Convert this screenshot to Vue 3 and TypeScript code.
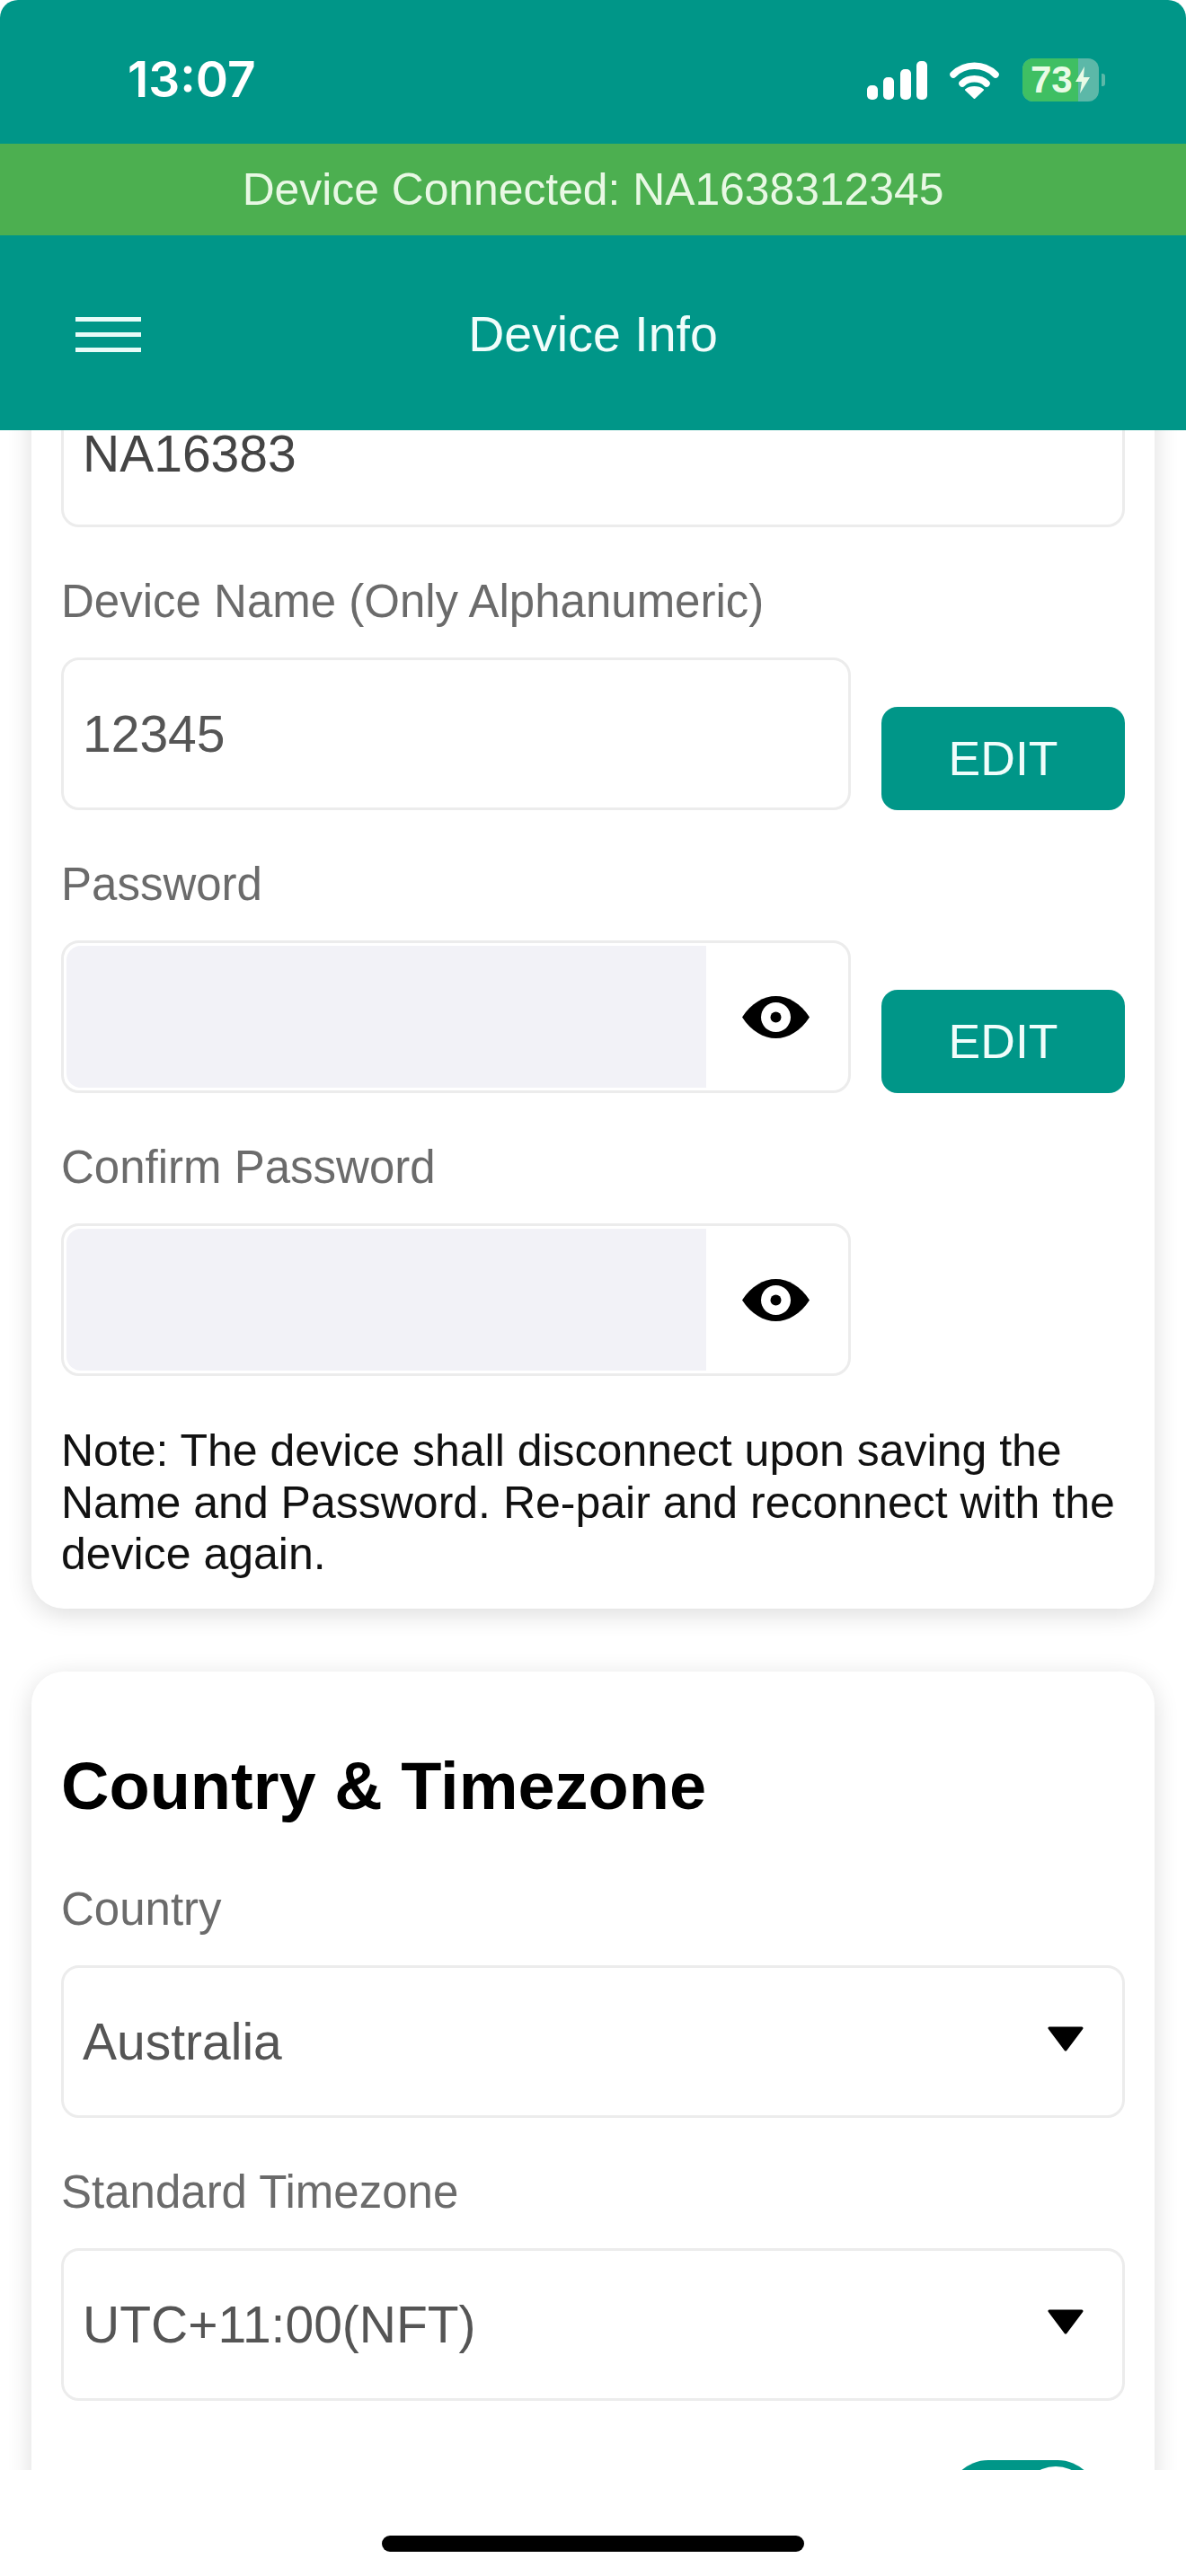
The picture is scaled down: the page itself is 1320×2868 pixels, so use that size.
<template>
  <div class="screen">
    <div class="status-bar">
      <span class="clock">13:07</span>
      <div class="status-icons">
        <svg class="signal" width="67" height="43" viewBox="0 0 67 43">
          <rect x="0" y="27" width="12" height="16" rx="5" fill="#fff" />
          <rect x="18" y="18" width="12" height="25" rx="5" fill="#fff" />
          <rect x="37" y="9" width="12" height="34" rx="5" fill="#fff" />
          <rect x="55" y="0" width="12" height="43" rx="5" fill="#fff" />
        </svg>
        <svg class="wifi" width="55" height="41" viewBox="0 0 55 41">
          <path d="M4 14 C17 1 38 1 51 14" fill="none" stroke="#fff" stroke-width="7.5" stroke-linecap="round" />
          <path d="M14 24 C21 17 34 17 41 24" fill="none" stroke="#fff" stroke-width="7.5" stroke-linecap="round" />
          <path d="M27.5 40 L18 31 C23 27 32 27 37 31 Z" fill="#fff" stroke="#fff" stroke-width="2" stroke-linejoin="round" />
        </svg>
        <div class="battery">
          <div class="battery-fill"></div>
          <span class="battery-text">73</span>
          <svg class="bolt" width="18" height="32" viewBox="0 0 18 30">
            <path d="M11 0 L1 17 H8 L6 30 L17 12 H10 Z" fill="#e9fbe6" />
          </svg>
        </div>
        <div class="battery-cap"></div>
      </div>
    </div>
    <div class="connection-bar">Device Connected: NA1638312345</div>
    <div class="app-header">
      <div class="menu-btn">
        <span></span>
        <span></span>
        <span></span>
      </div>
      <div class="title">Device Info</div>
    </div>

    <div class="content">
      <section class="card card-device">
        <div class="field first-field">
          <div class="input-box single">{{ serial }}</div>
        </div>

        <div class="field">
          <label>Device Name (Only Alphanumeric)</label>
          <div class="row">
            <div class="input-box">{{ deviceName }}</div>
            <button class="edit-btn">EDIT</button>
          </div>
        </div>

        <div class="field">
          <label>Password</label>
          <div class="row">
            <div class="input-box password">
              <div class="pw-fill"></div>
              <div class="eye">
                <svg width="75" height="47" viewBox="0 0 75 47">
                  <path fill="#000" :d="eyePath" />
                  <circle cx="37.5" cy="23.5" r="16.5" fill="#fff" />
                  <circle cx="37.5" cy="23.5" r="6" fill="#000" />
                </svg>
              </div>
            </div>
            <button class="edit-btn">EDIT</button>
          </div>
        </div>

        <div class="field">
          <label>Confirm Password</label>
          <div class="row">
            <div class="input-box password">
              <div class="pw-fill"></div>
              <div class="eye">
                <svg width="75" height="47" viewBox="0 0 75 47">
                  <path fill="#000" :d="eyePath" />
                  <circle cx="37.5" cy="23.5" r="16.5" fill="#fff" />
                  <circle cx="37.5" cy="23.5" r="6" fill="#000" />
                </svg>
              </div>
            </div>
            <div class="edit-spacer"></div>
          </div>
        </div>

        <p class="note">
          Note: The device shall disconnect upon saving the Name and Password. Re-pair and reconnect with the device again.
        </p>
      </section>

      <section class="card card-timezone">
        <h2>Country &amp; Timezone</h2>
        <div v-for="item in selects" :key="item.label" class="field select-field">
          <label>{{ item.label }}</label>
          <div class="input-box select">
            <span>{{ item.value }}</span>
            <svg class="caret" width="42" height="28" viewBox="0 0 42 28">
              <path d="M3 2 H39 L21 26 Z" fill="#000" stroke="#000" stroke-width="3" stroke-linejoin="round" />
            </svg>
          </div>
        </div>
        <div class="toggle-row">
          <div class="toggle"><div class="knob"></div></div>
        </div>
      </section>
    </div>

    <div class="home-area">
      <div class="home-indicator"></div>
    </div>
  </div>
</template>

<script setup lang="ts">
const serial = 'NA16383';
const deviceName = '12345';

// almond outline of the eye, the ring and pupil are drawn on top
const eyePath =
  'M0 23.5C10 8 24 0 37.5 0S65 8 75 23.5C65 39 51 47 37.5 47S10 39 0 23.5Z';

const selects = [
  { label: 'Country', value: 'Australia' },
  { label: 'Standard Timezone', value: 'UTC+11:00(NFT)' },
];
</script>

<style scoped>
.screen {
  width: 1320px;
  height: 2868px;
  display: flex;
  flex-direction: column;
  background: #fff;
  overflow: hidden;
  border-radius: 20px 20px 0 0;
  font-family: "Liberation Sans", Arial, sans-serif;
}

.status-bar {
  height: 160px;
  flex-shrink: 0;
  background: #009688;
  display: flex;
  justify-content: space-between;
  align-items: center;
  padding: 0 90px 0 142px;
  color: #fff;
}

.clock {
  font-family: Inter, "Liberation Sans", sans-serif;
  font-size: 55px;
  font-weight: 600;
  margin-top: 16px;
}

.status-icons {
  display: flex;
  align-items: center;
  margin-top: 18px;
}

.wifi {
  margin-left: 25px;
}

.battery {
  position: relative;
  width: 85px;
  height: 48px;
  margin-left: 26px;
  border-radius: 12px;
  background: #5cb8a8;
  overflow: hidden;
  display: flex;
  align-items: center;
  padding-left: 9px;
  box-sizing: border-box;
}

.battery-fill {
  position: absolute;
  left: 0;
  top: 0;
  bottom: 0;
  width: 62px;
  background: #3fbf63;
}

.battery-text {
  position: relative;
  font-size: 42px;
  font-weight: 700;
  color: #e9fbe6;
  line-height: 1;
}

.bolt {
  position: relative;
  flex-shrink: 0;
  margin-left: 2px;
}

.battery-cap {
  width: 4px;
  height: 14px;
  margin-left: 3px;
  border-radius: 0 3px 3px 0;
  background: #5cb8a8;
}

.connection-bar {
  height: 102px;
  flex-shrink: 0;
  background: #4caf50;
  color: #e8f8e4;
  font-size: 49.8px;
  display: flex;
  align-items: center;
  justify-content: center;
}

.app-header {
  height: 217px;
  flex-shrink: 0;
  background: #009688;
  position: relative;
  z-index: 2;
  display: flex;
  align-items: center;
  justify-content: center;
}

.menu-btn {
  position: absolute;
  left: 84px;
  top: 91px;
  width: 73px;
  display: flex;
  flex-direction: column;
  gap: 12px;
}

.menu-btn span {
  display: block;
  height: 5px;
  background: #e8fbf8;
}

.title {
  color: #f0fdfb;
  font-size: 55.5px;
  margin-top: 2px;
}

.content {
  flex: 1;
  min-height: 0;
  overflow: hidden;
  padding: 0 35px;
  background: #fff;
}

.card {
  background: #fff;
  border-radius: 36px;
  box-shadow: 0 6px 28px rgba(0, 0, 0, 0.14);
  padding: 0 33px;
}

.card-device {
  margin-top: -100px;
  padding-bottom: 31px;
}

.card-timezone {
  margin-top: 70px;
  padding-top: 88px;
  padding-bottom: 40px;
}

h2 {
  margin: 0 0 70px;
  font-size: 74px;
  line-height: 80px;
  font-weight: 700;
  color: #000;
}

.field {
  margin-top: 56px;
}

.first-field {
  margin-top: 0;
}

label {
  display: block;
  font-size: 51px;
  line-height: 54px;
  color: #6b6b6b;
  margin-bottom: 35px;
}

.row {
  display: flex;
  align-items: flex-end;
  gap: 34px;
}

.input-box {
  flex: 1;
  height: 170px;
  box-sizing: border-box;
  border: 3px solid #ececec;
  border-radius: 20px;
  background: #fff;
  padding: 0 21px;
  display: flex;
  align-items: center;
  font-size: 57px;
  color: #555;
}

.input-box.single {
  height: 208px;
  padding-top: 44px;
  line-height: 50px;
  color: #444;
}

.input-box.password {
  padding: 3px;
  align-items: stretch;
}

.pw-fill {
  flex: 1;
  background: #f2f2f7;
  border-radius: 16px 0 0 16px;
}

.eye {
  width: 155px;
  display: flex;
  align-items: center;
  justify-content: center;
}

.edit-btn,
.edit-spacer {
  width: 271px;
  flex-shrink: 0;
}

.edit-btn {
  height: 115px;
  border: none;
  border-radius: 18px;
  background: #009688;
  color: #f0fdfb;
  font-family: inherit;
  font-size: 53.5px;
}

.note {
  margin: 55px 0 0;
  font-size: 50px;
  line-height: 57.5px;
  color: #111;
}

.select-field:first-of-type {
  margin-top: 0;
}

.input-box.select {
  justify-content: space-between;
  padding-right: 42px;
}

.caret {
  display: block;
  margin-top: -6px;
}

.toggle-row {
  display: flex;
  justify-content: flex-end;
  margin-top: 66px;
  padding-right: 30px;
}

.toggle {
  position: relative;
  width: 167px;
  height: 90px;
  border-radius: 45px;
  background: #009688;
}

.knob {
  position: absolute;
  right: 7px;
  top: 7px;
  width: 80px;
  height: 80px;
  border-radius: 50%;
  background: #fff;
}

.home-area {
  height: 118px;
  flex-shrink: 0;
  background: #fff;
  position: relative;
  z-index: 2;
  display: flex;
  justify-content: center;
}

.home-indicator {
  width: 470px;
  height: 18px;
  margin-top: 73px;
  border-radius: 9px;
  background: #000;
}
</style>

<style>
html,
body {
  background: #fff;
}
</style>
